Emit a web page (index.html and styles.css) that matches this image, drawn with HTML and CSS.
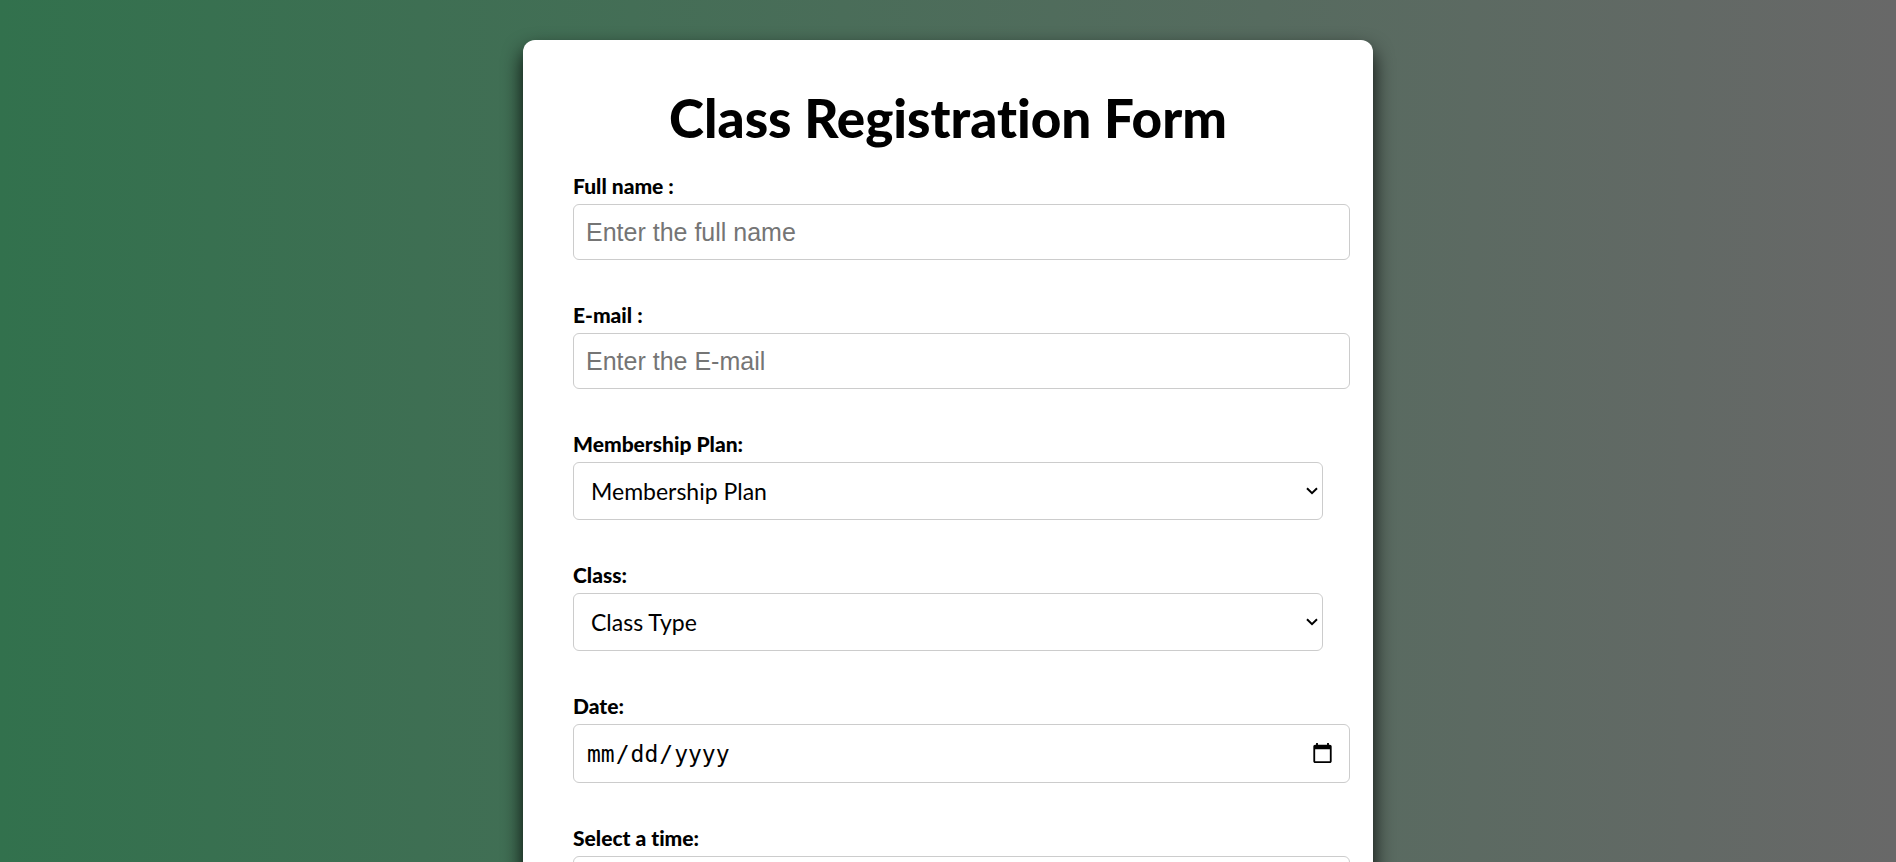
FILE: index.html
```html
<!DOCTYPE html>
<html lang="en">
<head>
<meta charset="utf-8">
<meta name="viewport" content="width=device-width, initial-scale=1">
<title>Class Registration Form</title>
<link rel="stylesheet" href="styles.css">
</head>
<body>
<main class="card">
  <h1 class="title">Class Registration Form</h1>
  <form class="form">
    <div class="field">
      <label class="label" for="name">Full name :</label>
      <input class="control" type="text" id="name" placeholder="Enter the full name">
    </div>
    <div class="field">
      <label class="label" for="email">E-mail :</label>
      <input class="control" type="email" id="email" placeholder="Enter the E-mail">
    </div>
    <div class="field">
      <label class="label" for="plan">Membership Plan:</label>
      <select class="control select" id="plan"><option>Membership Plan</option></select>
    </div>
    <div class="field">
      <label class="label" for="class">Class:</label>
      <select class="control select" id="class"><option>Class Type</option></select>
    </div>
    <div class="field">
      <label class="label" for="date">Date:</label>
      <input class="control date" type="date" id="date">
    </div>
    <div class="field">
      <label class="label" for="time">Select a time:</label>
      <input class="control date" type="time" id="time">
    </div>
  </form>
</main>
</body>
</html>
```

FILE: styles.css
```css
body {
  margin: 0;
  padding: 40px 0;
  font-family: Lato, sans-serif;
  font-variant-ligatures: none;
  color: #000;
  background: linear-gradient(to right, #32714d, #686868);
}

.card {
  box-sizing: border-box;
  max-width: 850px;
  margin: 0 auto;
  padding: 48px 50px 50px;
  background: #fff;
  border-radius: 12px;
  box-shadow: 0 10px 20px rgba(0, 0, 0, 0.9);
}

.title {
  margin: 0 0 25px;
  font-size: 53px;
  line-height: 60px;
  font-weight: 900;
  text-align: center;
}

.form {
  display: flex;
  flex-direction: column;
  gap: 42px;
}

.label {
  display: block;
  margin-bottom: 5px;
  font-size: 21px;
  line-height: 26px;
  font-weight: 900;
}

.control {
  display: block;
  box-sizing: content-box;
  width: 100%;
  height: 30px;
  padding: 12px 13px 12px 12px;
  border: 1px solid #ccc;
  border-radius: 6px;
  background: #fff;
  color: #000;
  font-family: "Liberation Sans", sans-serif;
  font-size: 25px;
}

.control::placeholder {
  color: #757575;
}

.select {
  appearance: none;
  box-sizing: border-box;
  height: 58px;
  padding: 12px 20px 12px 17px;
  font-family: Lato, sans-serif;
  font-size: 23px;
  background: #fff url("data:image/svg+xml,%3Csvg xmlns='http://www.w3.org/2000/svg' width='12' height='8' viewBox='0 0 12 8'%3E%3Cpath d='M1 1.3l5 4.9 5-4.9' fill='none' stroke='%23000' stroke-width='2'/%3E%3C/svg%3E") no-repeat right 4px center;
}

.date {
  height: 33px;
  font-family: "DejaVu Sans Mono", monospace;
  font-size: 23px;
}
```
